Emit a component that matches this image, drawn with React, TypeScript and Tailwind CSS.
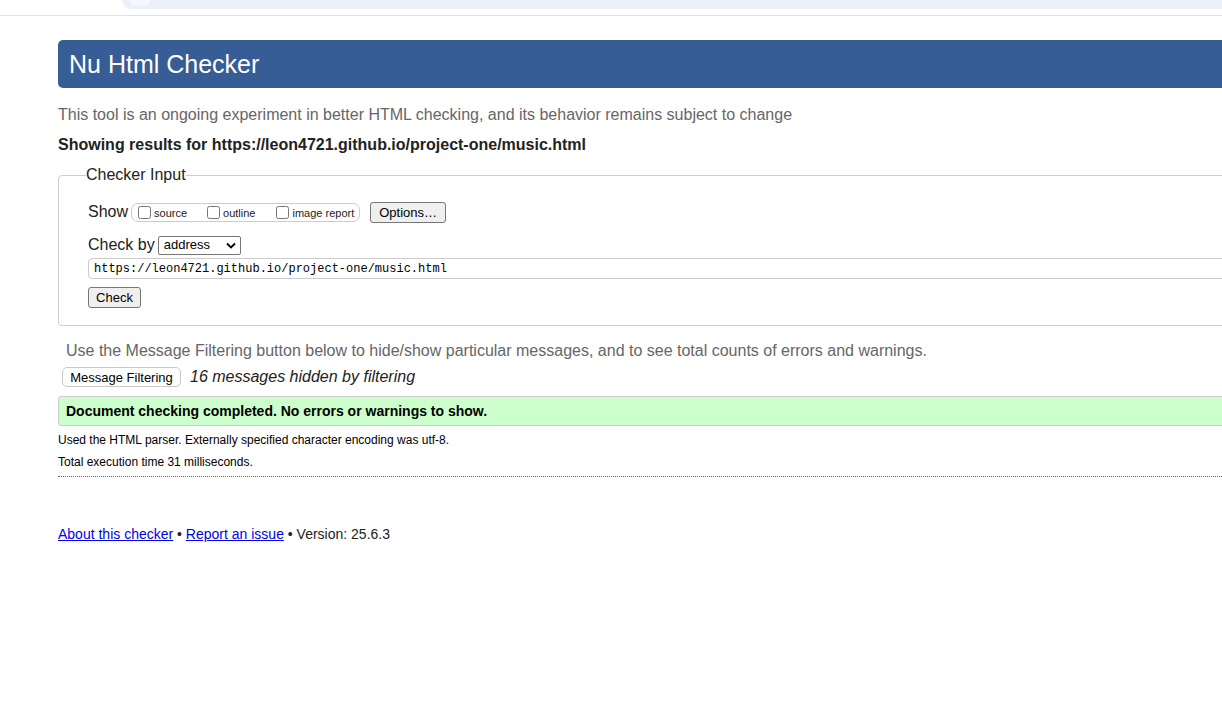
export default function App() {
  return (
    <div className="w-[1222px] h-[707px] overflow-hidden bg-white text-[#222] font-['Liberation_Sans',Arial,sans-serif]">
      {/* top strip */}
      <div className="h-[16px] border-b border-[#e3e3e3]">
        <div className="ml-[122px] h-[9px] rounded-bl-[14px] bg-[#ebf0fa] relative">
          <div className="absolute left-[8px] -top-[6px] w-[20px] h-[12px] rounded-full bg-[#f4f7fc]" />
        </div>
      </div>

      <div className="ml-[58px] w-[1300px]">
        <h1 className="mt-[24px] h-[48px] bg-[#365d96] rounded-[5px] flex items-center pl-[11px] text-white text-[25px] leading-none">
          Nu Html Checker
        </h1>

        <p className="mt-[18px] text-[16px] leading-[18px] text-[#666]">
          This tool is an ongoing experiment in better HTML checking, and its behavior remains subject to change
        </p>
        <p className="mt-[12px] text-[16px] leading-[18px] font-bold text-[#222]">
          Showing results for https://leon4721.github.io/project-one/music.html
        </p>

        <fieldset className="mt-[12px] border border-[#ccc] rounded-[4px] pl-[29px] pb-[17px]">
          <legend className="-ml-[2px] text-[16px] leading-[18px] text-[#222]">Checker Input</legend>

          <div className="mt-[18px] flex items-center h-[20px]">
            <span className="text-[16px] leading-[18px] mr-[3px]">Show</span>
            <div className="flex items-center h-[19px] border border-[#ccc] rounded-[7px] pl-[6px] pr-[5px]">
              <label className="flex items-center text-[11px] leading-none">
                <input type="checkbox" className="m-0 w-[13px] h-[13px]" />
                <span className="ml-[3px] mt-[2px]">source</span>
              </label>
              <label className="flex items-center text-[11px] leading-none ml-[20px]">
                <input type="checkbox" className="m-0 w-[13px] h-[13px]" />
                <span className="ml-[3px] mt-[2px]">outline</span>
              </label>
              <label className="flex items-center text-[11px] leading-none ml-[21px]">
                <input type="checkbox" className="m-0 w-[13px] h-[13px]" />
                <span className="ml-[3px] mt-[2px]">image report</span>
              </label>
            </div>
            <button className="ml-[10px] h-[21px] px-[8px] bg-[#efefef] border border-[#767676] rounded-[3px] text-[13px] leading-none text-black">
              Options…
            </button>
          </div>

          <div className="mt-[13px] flex items-center h-[20px]">
            <span className="text-[16px] leading-[18px]">Check by</span>
            <div className="ml-[3px] w-[83px] h-[19px] border border-[#767676] rounded-[2px] flex items-center justify-between pl-[5px] pr-[4px] text-[13px] text-black">
              <span>address</span>
              <svg width="10" height="7" viewBox="0 0 10 7" fill="none">
                <path d="M1 1.5 L5 5.5 L9 1.5" stroke="#000" strokeWidth="1.8" />
              </svg>
            </div>
          </div>

          <div className="mt-[3px] h-[21px] border border-[#ccc] rounded-[4px] flex items-center pl-[5px] font-['Liberation_Mono',monospace] text-[12px] text-black">
            https://leon4721.github.io/project-one/music.html
          </div>

          <button className="mt-[8px] h-[21px] w-[53px] bg-[#efefef] border border-[#767676] rounded-[3px] text-[13px] leading-none text-black block">
            Check
          </button>
        </fieldset>

        <p className="mt-[16px] ml-[8px] text-[16px] leading-[18px] text-[#666]">
          Use the Message Filtering button below to hide/show particular messages, and to see total counts of errors and warnings.
        </p>
        <div className="mt-[7px] flex items-center">
          <button className="ml-[4px] h-[20px] w-[119px] bg-white border border-[#c8c8c8] rounded-[5px] text-[13px] leading-none text-black">
            Message Filtering
          </button>
          <span className="ml-[9px] italic text-[16px] leading-[18px] text-[#222]">16 messages hidden by filtering</span>
        </div>

        <div className="mt-[9px] h-[30px] bg-[#ccffcc] border border-[#ccc] rounded-[3px] flex items-center pl-[7px] text-[14px] font-bold text-black">
          Document checking completed. No errors or warnings to show.
        </div>

        <p className="mt-[7px] text-[12px] leading-[14px] text-black">
          Used the HTML parser. Externally specified character encoding was utf-8.
        </p>
        <p className="mt-[8px] text-[12px] leading-[14px] text-black">Total execution time 31 milliseconds.</p>
        <div className="mt-[7px] border-t border-dotted border-[#666]" />

        <p className="mt-[49px] text-[14px] leading-[16px] text-[#222]">
          <a href="#" className="text-[#0000ee] underline">About this checker</a>
          {" • "}
          <a href="#" className="text-[#0000ee] underline">Report an issue</a>
          {" • Version: 25.6.3"}
        </p>
      </div>
    </div>
  );
}
